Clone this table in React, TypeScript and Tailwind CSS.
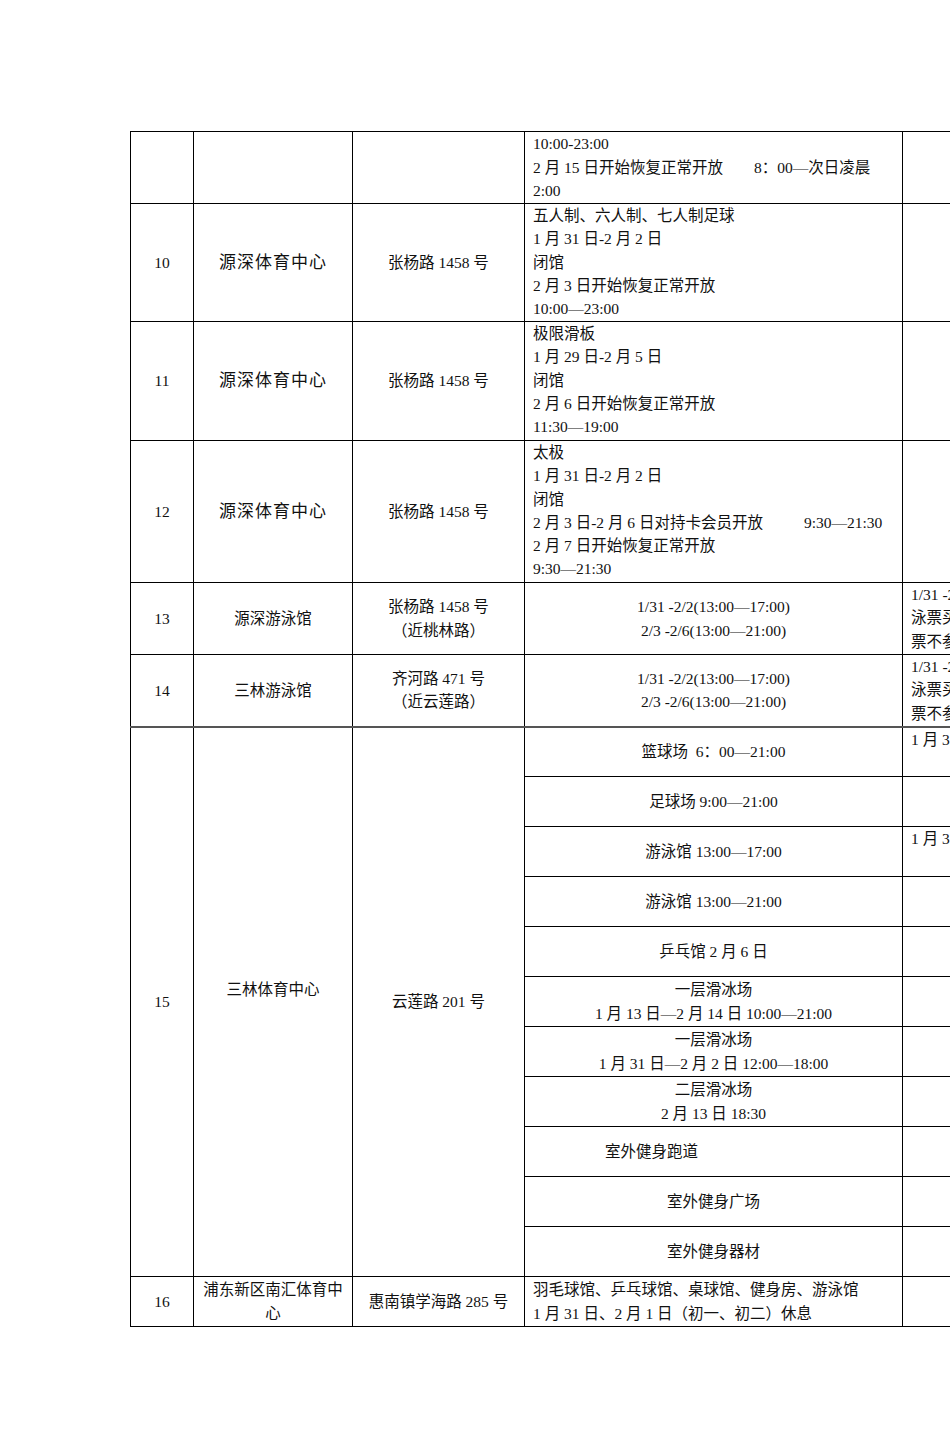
import React from "react";

const cell = "border border-black px-[8px] py-0 align-middle";
const spacer = (w: string) => <span className={`inline-block ${w}`} />;

function SubRow({ children, right, className = "" }: { children: React.ReactNode; right?: React.ReactNode; className?: string }) {
    return (
        <tr className="h-[50px]">
            <td className={`${cell} text-center ${className}`}>{children}</td>
            <td className={`${cell} align-top`}>{right}</td>
        </tr>
    );
}

export default function App() {
    return (
        <div className="w-[950px] h-[1433px] overflow-hidden bg-white pt-[131px] pl-[130px] text-[#111] font-['Liberation_Serif','Noto_Sans_CJK_SC',serif] text-[15.5px] leading-[23.3px]">
            <table className="table-fixed border-collapse w-[972px]">
                <colgroup>
                    <col className="w-[63px]" />
                    <col className="w-[159px]" />
                    <col className="w-[172px]" />
                    <col className="w-[378px]" />
                    <col className="w-[200px]" />
                </colgroup>
                <tbody>
                    {/* continued from previous page */}
                    <tr className="h-[72px]">
                        <td className={cell}></td>
                        <td className={cell}></td>
                        <td className={cell}></td>
                        <td className={`${cell} align-top whitespace-nowrap leading-[23.6px]`}>
                            10:00-23:00
                            <br />2 月 15 日开始恢复正常开放{spacer("w-[31px]")}8：00—次日凌晨
                            <br />2:00
                        </td>
                        <td className={cell}></td>
                    </tr>

                    {/* 10 */}
                    <tr className="h-[118px]">
                        <td className={`${cell} text-center`}>10</td>
                        <td className={`${cell} text-center text-[17px] tracking-[1px]`}>源深体育中心</td>
                        <td className={`${cell} text-center`}>张杨路 1458 号</td>
                        <td className={`${cell} align-top`}>
                            五人制、六人制、七人制足球
                            <br />1 月 31 日-2 月 2 日
                            <br />闭馆
                            <br />2 月 3 日开始恢复正常开放
                            <br />10:00—23:00
                        </td>
                        <td className={cell}></td>
                    </tr>

                    {/* 11 */}
                    <tr className="h-[119px]">
                        <td className={`${cell} text-center`}>11</td>
                        <td className={`${cell} text-center text-[17px] tracking-[1px]`}>源深体育中心</td>
                        <td className={`${cell} text-center`}>张杨路 1458 号</td>
                        <td className={`${cell} align-top`}>
                            极限滑板
                            <br />1 月 29 日-2 月 5 日
                            <br />闭馆
                            <br />2 月 6 日开始恢复正常开放
                            <br />11:30—19:00
                        </td>
                        <td className={cell}></td>
                    </tr>

                    {/* 12 */}
                    <tr className="h-[142px]">
                        <td className={`${cell} text-center`}>12</td>
                        <td className={`${cell} text-center text-[17px] tracking-[1px]`}>源深体育中心</td>
                        <td className={`${cell} text-center`}>张杨路 1458 号</td>
                        <td className={`${cell} align-top whitespace-nowrap`}>
                            太极
                            <br />1 月 31 日-2 月 2 日
                            <br />闭馆
                            <br />2 月 3 日-2 月 6 日对持卡会员开放{spacer("w-[41px]")}9:30—21:30
                            <br />2 月 7 日开始恢复正常开放
                            <br />9:30—21:30
                        </td>
                        <td className={cell}></td>
                    </tr>

                    {/* 13 */}
                    <tr className="h-[72px]">
                        <td className={`${cell} text-center`}>13</td>
                        <td className={`${cell} text-center`}>源深游泳馆</td>
                        <td className={`${cell} text-center`}>
                            张杨路 1458 号
                            <br />（近桃林路）
                        </td>
                        <td className={`${cell} text-center`}>
                            1/31 -2/2(13:00—17:00)
                            <br />2/3 -2/6(13:00—21:00)
                        </td>
                        <td className={`${cell} align-top whitespace-nowrap`}>
                            1/31 -2/6 期间游
                            <br />泳票买一送一，
                            <br />票不参加活动
                        </td>
                    </tr>

                    {/* 14 */}
                    <tr className="h-[72px]">
                        <td className={`${cell} text-center`}>14</td>
                        <td className={`${cell} text-center`}>三林游泳馆</td>
                        <td className={`${cell} text-center`}>
                            齐河路 471 号
                            <br />（近云莲路）
                        </td>
                        <td className={`${cell} text-center`}>
                            1/31 -2/2(13:00—17:00)
                            <br />2/3 -2/6(13:00—21:00)
                        </td>
                        <td className={`${cell} align-top whitespace-nowrap`}>
                            1/31 -2/6 期间游
                            <br />泳票买一送一，
                            <br />票不参加活动
                        </td>
                    </tr>

                    {/* 15 */}
                    <tr className="h-[50px]">
                        <td rowSpan={11} className={`${cell} text-center border-t-2 border-t-[#555]`}>15</td>
                        <td rowSpan={11} className={`${cell} text-center border-t-2 border-t-[#555]`}>
                            三林体育中心
                            <br />&nbsp;
                        </td>
                        <td rowSpan={11} className={`${cell} text-center border-t-2 border-t-[#555]`}>云莲路 201 号</td>
                        <td className={`${cell} text-center border-t-2 border-t-[#555]`}>篮球场&nbsp; 6：00—21:00</td>
                        <td className={`${cell} align-top whitespace-nowrap border-t-2 border-t-[#555]`}>1 月 31 日起</td>
                    </tr>
                    <SubRow>足球场 9:00—21:00</SubRow>
                    <SubRow right={<span className="whitespace-nowrap">1 月 31 日起</span>}>游泳馆 13:00—17:00</SubRow>
                    <SubRow>游泳馆 13:00—21:00</SubRow>
                    <SubRow>乒乓馆 2 月 6 日</SubRow>
                    <SubRow>
                        一层滑冰场
                        <br />1 月 13 日—2 月 14 日 10:00—21:00
                    </SubRow>
                    <SubRow>
                        一层滑冰场
                        <br />1 月 31 日—2 月 2 日 12:00—18:00
                    </SubRow>
                    <SubRow>
                        二层滑冰场
                        <br />2 月 13 日 18:30
                    </SubRow>
                    <SubRow className="!text-left !pl-[80px]">室外健身跑道</SubRow>
                    <SubRow>室外健身广场</SubRow>
                    <SubRow>室外健身器材</SubRow>

                    {/* 16 */}
                    <tr className="h-[50px]">
                        <td className={`${cell} text-center`}>16</td>
                        <td className={`${cell} text-center`}>浦东新区南汇体育中心</td>
                        <td className={`${cell} text-center`}>惠南镇学海路 285 号</td>
                        <td className={`${cell} whitespace-nowrap`}>
                            羽毛球馆、乒乓球馆、桌球馆、健身房、游泳馆
                            <br />1 月 31 日、2 月 1 日（初一、初二）休息
                        </td>
                        <td className={cell}></td>
                    </tr>
                </tbody>
            </table>
        </div>
    );
}
